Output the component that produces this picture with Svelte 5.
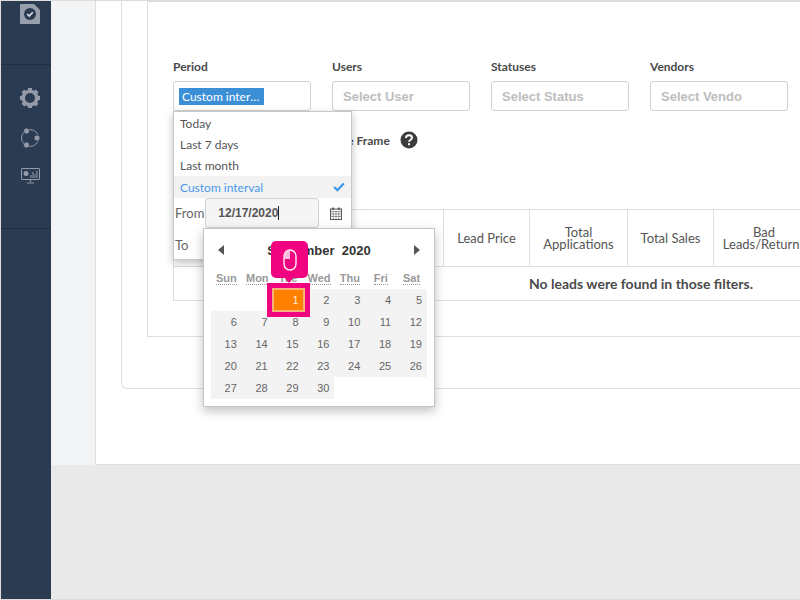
<script>
    const filters = [
        { label: 'Users', placeholder: 'Select User' },
        { label: 'Statuses', placeholder: 'Select Status' },
        { label: 'Vendors', placeholder: 'Select Vendo' },
    ];
    const options = ['Today', 'Last 7 days', 'Last month'];
    const columns = [
        { title: 'Total Called', width: 270 },
        { title: 'Lead Price', width: 86 },
        { title: 'Total Applications', width: 98 },
        { title: 'Total Sales', width: 86 },
        { title: 'Bad Leads/Returns', width: 100 },
    ];
    const weekdays = ['Sun', 'Mon', 'Tue', 'Wed', 'Thu', 'Fri', 'Sat'];
    const days = Array.from({ length: 30 }, (_, i) => i + 1);
</script>

<div class="shell">
    <nav class="sidebar">
        <div class="logo-block">
            <svg width="20" height="20" viewBox="0 0 20 20">
                <path d="M1 0h13l6 6v13a1 1 0 0 1-1 1H1a1 1 0 0 1-1-1V1a1 1 0 0 1 1-1z" fill="#98a0ad" />
                <circle cx="10" cy="10" r="6" fill="#2b3c52" />
                <path d="M7.200 10l2 2 3.600-3.800" fill="none" stroke="#dfe2e7" stroke-width="1.600" />
            </svg>
        </div>
        <div class="icon-block">
            <svg width="20" height="20" viewBox="0 0 20 20">
                <circle cx="10" cy="10" r="6.800" fill="none" stroke="#949aa7" stroke-width="3.600" />
                <g fill="#949aa7">
                    <rect x="8" y="0" width="4" height="3" />
                    <rect x="8" y="17" width="4" height="3" />
                    <rect x="0" y="8" width="3" height="4" />
                    <rect x="17" y="8" width="3" height="4" />
                    <rect x="8" y="0" width="4" height="3" transform="rotate(45 10 10)" />
                    <rect x="8" y="0" width="4" height="3" transform="rotate(135 10 10)" />
                    <rect x="8" y="0" width="4" height="3" transform="rotate(225 10 10)" />
                    <rect x="8" y="0" width="4" height="3" transform="rotate(315 10 10)" />
                </g>
            </svg>
            <svg width="20" height="20" viewBox="0 0 20 20">
                <circle cx="10" cy="10" r="8.500" fill="none" stroke="#949aa7" stroke-width="1" />
                <g fill="#949aa7" stroke="#2b3c52" stroke-width="0.800">
                    <circle cx="6.500" cy="3" r="3" />
                    <circle cx="17" cy="10" r="3" />
                    <circle cx="6.500" cy="17" r="3" />
                </g>
            </svg>
            <svg width="19" height="16" viewBox="0 0 19 16">
                <rect x="0.500" y="0.500" width="18" height="11" rx="0.500" fill="none" stroke="#949aa7" />
                <circle cx="5" cy="5.500" r="2.500" fill="#949aa7" />
                <path d="M10 10V7M12 10V4M14 10V6M16 10V3" stroke="#949aa7" />
                <path d="M9.500 12v2M6 15h7" stroke="#949aa7" />
            </svg>
        </div>
    </nav>

    <div class="right">
        <div class="upper">
            <div class="rail"></div>
            <main class="content">
                <section class="card">
                    <div class="box">
                        <div class="filters">
                            <div class="field period">
                                <span class="label">Period</span>
                                <div class="input">
                                    <span class="selected">Custom interval</span>
                                </div>

                                <div class="dropdown">
                                    {#each options as option}
                                        <div class="option">{option}</div>
                                    {/each}
                                    <div class="option active">
                                        Custom interval
                                        <svg width="12" height="10" viewBox="0 0 12 10">
                                            <path d="M1.200 5l3.200 3.200L10.800 1.400" fill="none" stroke="#3d97ea" stroke-width="2.200" />
                                        </svg>
                                    </div>
                                    <div class="range-row">
                                        <span>From</span>
                                        <div class="date-input">12/17/2020<i class="caret"></i></div>
                                        <svg class="cal-icon" width="12" height="13" viewBox="0 0 12 13">
                                            <rect x="0.500" y="2" width="11" height="10.500" fill="none" stroke="#555" />
                                            <path d="M0.500 4.500h11M0.500 7h11M0.500 9.500h11M3.200 4.500v8M6 4.500v8M8.800 4.500v8" stroke="#777" stroke-width="0.700" />
                                            <path d="M3 0.500v2.500M9 0.500v2.500" stroke="#444" stroke-width="1.500" />
                                        </svg>
                                    </div>
                                    <div class="range-row to"><span>To</span></div>
                                </div>

                                <div class="calendar">
                                    <div class="cal-head">
                                        <i class="arrow left"></i>
                                        <b>September&nbsp; 2020</b>
                                        <i class="arrow right-arrow"></i>
                                    </div>
                                    <div class="cal-grid">
                                        {#each weekdays as d}
                                            <div class="weekday"><abbr>{d}</abbr></div>
                                        {/each}
                                        <div class="blank"></div>
                                        <div class="blank"></div>
                                        {#each days as day}
                                            <div class="day" class:picked={day === 1}>{day}</div>
                                        {/each}
                                    </div>
                                    <div class="tip">
                                        <svg width="14" height="22" viewBox="0 0 14 22">
                                            <rect x="1" y="1" width="12" height="20" rx="6" fill="none" stroke="#fff" stroke-width="1.300" />
                                            <path d="M7 1a6 6 0 0 0-6 6v3h6z" fill="#ffc0e0" />
                                        </svg>
                                    </div>
                                </div>
                            </div>

                            {#each filters as f}
                                <div class="field">
                                    <span class="label">{f.label}</span>
                                    <div class="input placeholder">{f.placeholder}</div>
                                </div>
                            {/each}
                        </div>

                        <div class="timeframe">
                            <span>Time Frame</span>
                            <svg width="18" height="18" viewBox="0 0 18 18">
                                <circle cx="9" cy="9" r="8.500" fill="#3c3c3c" />
                                <path d="M6 7c0-1.800 1.300-2.700 3-2.700s3 1 3 2.500c0 2.200-3 2.100-3 4" fill="none" stroke="#fff" stroke-width="1.900" />
                                <rect x="8" y="12.200" width="2" height="2" fill="#fff" />
                            </svg>
                        </div>

                        <div class="table">
                            <div class="thead">
                                {#each columns as c}
                                    <div class="th" style="width: {c.width}px">{c.title}</div>
                                {/each}
                            </div>
                            <div class="empty">No leads were found in those filters.</div>
                        </div>
                    </div>
                </section>
            </main>
        </div>
    </div>
</div>

<style>
    :global(body) {
        background: #e9e9e9;
        font-family: Lato, "Liberation Sans", sans-serif;
    }
    .shell {
        display: flex;
        height: 600px;
        box-sizing: border-box;
        border: 1px solid #dcdcdc;
        border-right: none;
        overflow: hidden;
    }
    .sidebar {
        width: 50px;
        flex: none;
        background: #2b3c52;
    }
    .logo-block {
        height: 64px;
        box-sizing: border-box;
        padding: 3px 0 0 19px;
        border-bottom: 1px solid #222f3e;
    }
    .logo-block svg {
        display: block;
    }
    .icon-block {
        height: 164px;
        box-sizing: border-box;
        padding: 23px 0 0 19px;
        border-bottom: 1px solid #222f3e;
        display: flex;
        flex-direction: column;
        gap: 20px;
    }
    .icon-block svg:last-child {
        margin-left: 1px;
    }
    .right {
        flex: 1;
        min-width: 0;
    }
    .upper {
        display: flex;
        height: 464px;
    }
    .rail {
        width: 44px;
        flex: none;
        background: #f3f4f6;
    }
    .content {
        flex: 1;
        min-width: 0;
        overflow: hidden;
        background: #fff;
        border-left: 1px solid #dedede;
        border-bottom: 1px solid #dedede;
        padding-left: 25px;
    }
    .card {
        width: 760px;
        height: 388px;
        box-sizing: border-box;
        border: 1px solid #dedede;
        border-top: none;
        border-radius: 0 0 6px 6px;
        padding-left: 25px;
    }
    .box {
        position: relative;
        height: 336px;
        box-sizing: border-box;
        border: 1px solid #dedede;
        border-right: none;
        padding: 58px 0 0 25px;
    }
    .filters {
        display: flex;
        gap: 21px;
    }
    .field {
        position: relative;
        width: 138px;
    }
    .field:nth-child(3) {
        margin-left: 0;
    }
    .label {
        display: block;
        font-size: 12px;
        font-weight: 700;
        line-height: 14px;
        color: #4a4a4a;
        margin-bottom: 7px;
    }
    .input {
        box-sizing: border-box;
        height: 30px;
        border: 1px solid #d2d2d2;
        border-radius: 3px;
        padding: 6px 5px;
        font-size: 13px;
        line-height: 17px;
        background: #fff;
    }
    .placeholder {
        padding-left: 10px;
        font-family: "Liberation Sans", sans-serif;
        font-size: 13px;
        font-weight: 700;
        color: #bdbdbd;
    }
    .selected {
        display: block;
        width: 85px;
        padding-left: 3px;
        box-sizing: border-box;
        background: #3a8fd6;
        color: #fff;
        font-size: 12px;
        overflow: hidden;
        white-space: nowrap;
        text-overflow: ellipsis;
    }
    .dropdown {
        position: absolute;
        left: 0;
        top: 51px;
        width: 179px;
        height: 149px;
        box-sizing: border-box;
        background: #fff;
        border: 1px solid #c8c8c8;
        box-shadow: 0 3px 8px rgba(0, 0, 0, 0.25);
        z-index: 2;
        padding-top: 1px;
        font-size: 12px;
        color: #555;
    }
    .option {
        display: flex;
        justify-content: space-between;
        align-items: center;
        height: 21px;
        padding: 0 6px;
    }
    .option.active {
        height: 22px;
        background: #f2f2f2;
        color: #4a9bea;
    }
    .range-row {
        display: flex;
        align-items: center;
        height: 30px;
        font-size: 13px;
        padding-left: 1px;
        color: #666;
    }
    .range-row.to {
        height: 34px;
    }
    .date-input {
        box-sizing: border-box;
        width: 114px;
        height: 30px;
        margin-left: 1px;
        padding-left: 12px;
        border: 1px solid #d2d2d2;
        border-radius: 3px;
        background: #f5f5f5;
        font-family: "Liberation Sans", sans-serif;
        font-size: 12px;
        font-weight: 700;
        line-height: 28px;
        color: #555;
    }
    .caret {
        display: inline-block;
        width: 1px;
        height: 14px;
        background: #222;
        vertical-align: -3px;
    }
    .cal-icon {
        margin-left: 11px;
    }
    .calendar {
        position: absolute;
        left: 30px;
        top: 168px;
        width: 232px;
        height: 179px;
        box-sizing: border-box;
        background: #fff;
        border: 1px solid #c4c4c4;
        box-shadow: 0 4px 10px rgba(0, 0, 0, 0.25);
        z-index: 3;
        padding: 0 7px;
        font-family: "Liberation Sans", sans-serif;
    }
    .cal-head {
        display: flex;
        justify-content: space-between;
        align-items: center;
        height: 42px;
        padding: 0 7px;
        font-size: 13px;
        color: #333;
    }
    .arrow {
        width: 0;
        height: 0;
        border-top: 5px solid transparent;
        border-bottom: 5px solid transparent;
    }
    .left {
        border-right: 6px solid #555;
    }
    .right-arrow {
        border-left: 6px solid #555;
    }
    .cal-grid {
        display: grid;
        grid-template-columns: repeat(7, 1fr);
        grid-auto-rows: 22px;
        margin-top: -4px;
        width: 216px;
    }
    .weekday {
        grid-row: 1;
        text-align: center;
        font-size: 11px;
        font-weight: 700;
        line-height: 22px;
        color: #999;
    }
    abbr {
        border-bottom: 1px dotted #999;
    }
    .blank {
        background: #fff;
    }
    .day {
        background: #f3f3f3;
        font-size: 11px;
        line-height: 22px;
        text-align: right;
        padding-right: 5px;
        color: #666;
    }
    .day.picked {
        position: relative;
        z-index: 1;
        background: #ff7f00;
        color: #ffe9d2;
        box-shadow: inset 0 0 0 1px #f7b27a, 0 0 0 1px #f7b27a, 0 0 0 6px #f0047f;
    }
    .tip {
        position: absolute;
        left: 67px;
        top: 12px;
        width: 37px;
        height: 37px;
        border-radius: 5px;
        background: #f0047f;
        display: flex;
        align-items: center;
        justify-content: center;
        z-index: 2;
    }
    .tip::after {
        content: '';
        position: absolute;
        left: 13px;
        top: 36px;
        border-left: 5px solid transparent;
        border-right: 5px solid transparent;
        border-top: 6px solid #f0047f;
    }
    .timeframe {
        display: flex;
        align-items: center;
        gap: 10px;
        margin: 20px 0 0 154px;
        font-size: 12px;
        font-weight: 700;
        color: #4a4a4a;
    }
    .table {
        margin-top: 60px;
        width: 640px;
        border-left: 1px solid #dedede;
    }
    .thead {
        display: flex;
        height: 56px;
        border-top: 1px solid #dedede;
        border-bottom: 1px solid #dedede;
    }
    .th {
        box-sizing: border-box;
        flex: none;
        display: flex;
        align-items: center;
        justify-content: center;
        text-align: center;
        line-height: 12px;
        font-size: 13px;
        color: #555;
        border-right: 1px solid #dedede;
        white-space: normal;
        padding: 0 4px;
    }
    .th:last-child {
        border-right: none;
    }
    .empty {
        height: 33px;
        line-height: 33px;
        border-bottom: 1px solid #dedede;
        font-size: 14px;
        font-weight: 700;
        color: #4a4a4a;
        padding-left: 355px;
    }
</style>
